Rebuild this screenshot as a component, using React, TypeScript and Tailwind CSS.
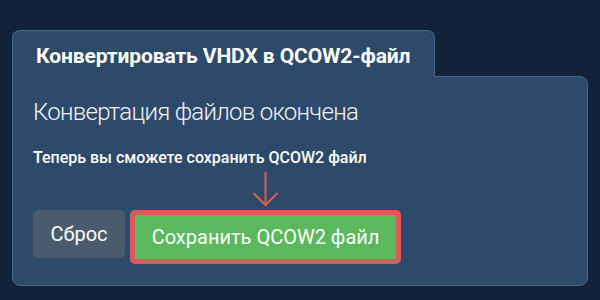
export default function App() {
  return (
    <div
      className="h-[300px] w-[600px] bg-[#10233a] pt-[30px] pl-[12px]"
      style={{ fontFamily: 'Roboto, "Noto Sans", sans-serif' }}
    >
      <div className="relative z-10 w-[423px] rounded-t-lg border-l border-r border-t border-[#4b6686] bg-[#2d4a6a] pl-[23px] pt-[13px] pb-[9px]">
        <h1 className="text-[21px] font-bold leading-6 tracking-[-0.005em] text-white whitespace-nowrap">
          Конвертировать VHDX в QCOW2-файл
        </h1>
      </div>
      <div className="-mt-px w-[576px] rounded-b-lg rounded-tr-lg border border-[#4b6686] bg-[#2d4a6a] px-5 pt-5 pb-[21px]">
        <h2 className="text-[24px] font-light leading-[30px] tracking-[-0.03em] text-[#f1f4f8] whitespace-nowrap">
          Конвертация файлов окончена
        </h2>
        <p className="mt-[19px] text-[16px] font-medium leading-6 text-white whitespace-nowrap">
          Теперь вы сможете сохранить QCOW2 файл
        </p>
        <div className="relative mt-10 flex items-start gap-[5px]">
          <button
            type="button"
            className="flex h-12 w-[92px] items-center justify-center rounded-[5px] bg-[#4b5b6e] text-[20px] text-white"
          >
            Сброс
          </button>
          <button
            type="button"
            className="flex h-[54px] w-[271px] items-center justify-center rounded-[5px] border-[5px] border-[#dc5b57] bg-[#5cb85c] text-[20px] text-white whitespace-nowrap"
          >
            Сохранить QCOW2 файл
          </button>
          <svg
            className="absolute left-[219px] top-[-38px]"
            width="27"
            height="35"
            viewBox="0 0 27 35"
            fill="none"
            stroke="#dc5b57"
            strokeWidth="2"
          >
            <line x1="13.5" y1="0" x2="13.5" y2="33" />
            <polyline points="1.5,21 13.5,33 25.5,21" />
          </svg>
        </div>
      </div>
    </div>
  );
}
